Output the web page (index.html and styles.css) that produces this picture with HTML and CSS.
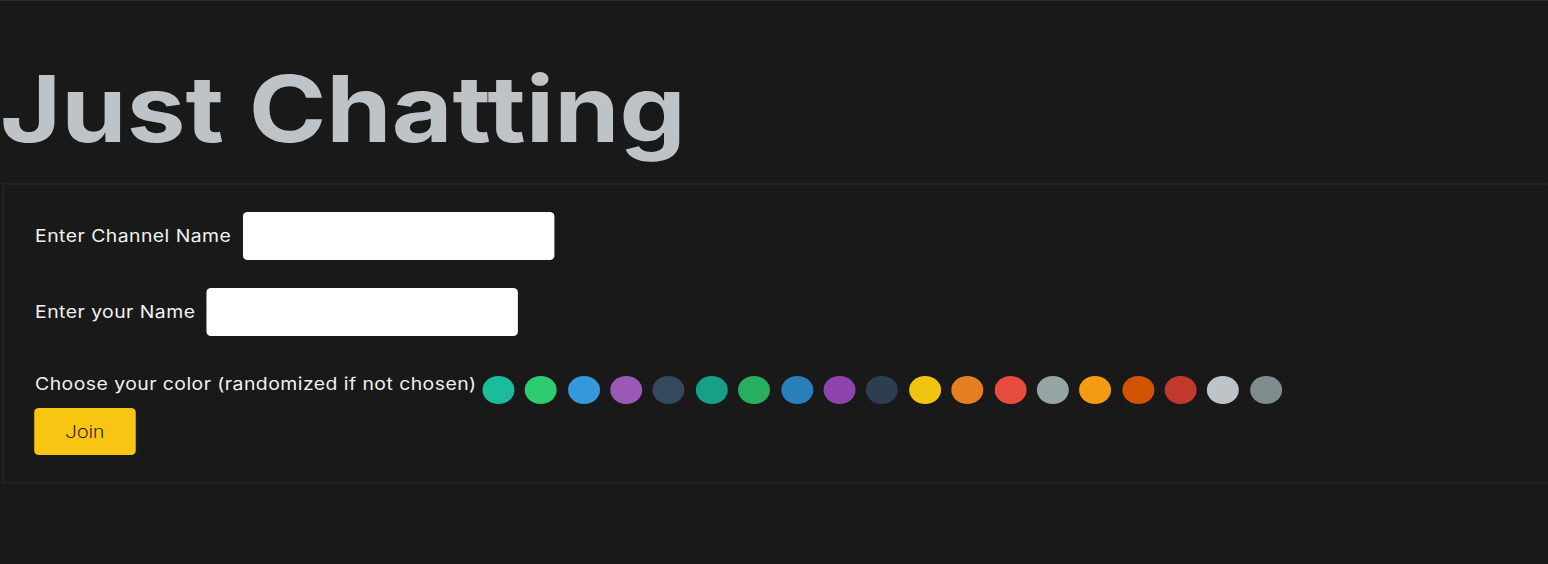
FILE: index.html
```html
<!DOCTYPE html>
<html>
<head>
<meta charset="utf-8">
<link rel="stylesheet" href="styles.css">
</head>
<body>
<div class="stage">
  <h1 class="title">Just Chatting</h1>
  <div class="panel">
    <div class="row">
      <label class="label">Enter Channel Name</label>
      <input class="field" type="text">
    </div>
    <div class="row">
      <label class="label">Enter your Name</label>
      <input class="field" type="text">
    </div>
    <div class="color-row">
      <span class="label">Choose your color (randomized if not chosen)</span>
      <div class="swatches">
        <span class="dot c1"></span><span class="dot c2"></span><span class="dot c3"></span><span class="dot c4"></span><span class="dot c5"></span><span class="dot c6"></span><span class="dot c7"></span><span class="dot c8"></span><span class="dot c9"></span><span class="dot c10"></span><span class="dot c11"></span><span class="dot c12"></span><span class="dot c13"></span><span class="dot c14"></span><span class="dot c15"></span><span class="dot c16"></span><span class="dot c17"></span><span class="dot c18"></span><span class="dot c19"></span>
      </div>
    </div>
    <button class="join">Join</button>
  </div>
</div>
</body>
</html>
```
FILE: styles.css
```css
html, body {
  margin: 0;
  background: #191919;
  overflow: hidden;
}
body {
  border-top: 1px solid #2a2b36;
  min-height: 563px;
}
.stage {
  width: 1357px;
  transform: scaleX(1.1407);
  transform-origin: 0 0;
}
.title {
  margin: 62px 0 28px 0;
  font-family: "Inter", "Liberation Sans", sans-serif;
  font-weight: 700;
  font-size: 92px;
  line-height: 1;
  color: #bdc3c7;
}
.panel {
  margin-left: 1.75px;
  border: 2px solid #222222;
  border-right: none;
  padding: 27px 0 27px 27px;
  display: flex;
  flex-direction: column;
  align-items: flex-start;
}
.row {
  display: flex;
  align-items: center;
  gap: 10px;
  margin-bottom: 28px;
}
.label {
  font-family: "Inter", "Liberation Sans", sans-serif;
  font-size: 17px;
  line-height: 20px;
  letter-spacing: 0.4px;
  color: #f2f2f2;
}
.field {
  width: 273px;
  height: 48px;
  box-sizing: border-box;
  border: none;
  border-radius: 4px;
  background: #ffffff;
  margin: 0;
}
.color-row {
  display: flex;
  align-items: flex-start;
  margin-top: 10px;
}
.swatches {
  display: flex;
  gap: 9.4px;
  margin-left: 5px;
  margin-top: 2px;
}
.dot {
  width: 28px;
  height: 28px;
  border-radius: 50%;
  display: block;
}
.c1 { background: #1abc9c; }
.c2 { background: #2ecc71; }
.c3 { background: #3498db; }
.c4 { background: #9b59b6; }
.c5 { background: #34495e; }
.c6 { background: #16a085; }
.c7 { background: #27ae60; }
.c8 { background: #2980b9; }
.c9 { background: #8e44ad; }
.c10 { background: #2c3e50; }
.c11 { background: #f1c40f; }
.c12 { background: #e67e22; }
.c13 { background: #e74c3c; }
.c14 { background: #95a5a6; }
.c15 { background: #f39c12; }
.c16 { background: #d35400; }
.c17 { background: #c0392b; }
.c18 { background: #bdc3c7; }
.c19 { background: #7f8c8d; }
.join {
  margin-top: 4px;
  margin-left: -1px;
  width: 89.5px;
  height: 47px;
  border: none;
  border-radius: 4px;
  background: #f9c513;
  color: #1e1e1e;
  font-family: "Roboto", "Liberation Sans", sans-serif;
  font-weight: 300;
  font-size: 18px;
}
```
